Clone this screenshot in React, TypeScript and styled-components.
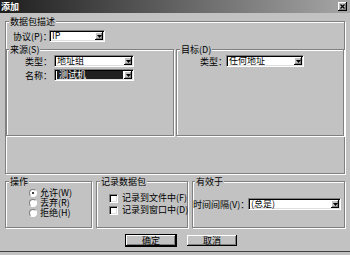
import React from "react";
import styled, { createGlobalStyle } from "styled-components";

const GRAY = "#c2c2c2";
const FONT = `"Noto Sans CJK SC", "Liberation Sans", sans-serif`;

const Global = createGlobalStyle`
  html, body { margin: 0; padding: 0; background: ${GRAY}; }
  body { width: 350px; height: 255px; overflow: hidden; font-family: ${FONT}; }
`;

const Window = styled.div`
  width: 350px;
  height: 252px;
  box-sizing: border-box;
  background: ${GRAY};
  border-bottom: 1px solid #404040;
  display: flex;
  flex-direction: column;
  font-size: 9px;
  line-height: 11px;
  color: #000;
`;

const TitleBar = styled.div`
  height: 13px;
  flex: none;
  display: flex;
  align-items: center;
  justify-content: space-between;
  padding: 0 3px 0 1px;
  background: linear-gradient(to right, #1e1e1e, #a6a6a6);
`;

const TitleText = styled.span`
  color: #fff;
  font-weight: 700;
  font-size: 9px;
  line-height: 11px;
`;

const CloseButton = styled.div`
  width: 9px;
  height: 9px;
  box-sizing: border-box;
  background: ${GRAY};
  box-shadow: inset -1px -1px #000, inset 1px 1px #fff, inset -2px -2px #808080;
  display: flex;
  align-items: center;
  justify-content: center;
`;

const Body = styled.div`
  flex: 1;
  display: flex;
  flex-direction: column;
  padding: 3px 5px 0;
`;

const Group = styled.fieldset<{ $h?: number; $pb?: number }>`
  margin: 0;
  padding: 0 0 ${(p) => p.$pb ?? 0}px;
  min-width: 0;
  min-inline-size: 0;
  border: 1px solid #808080;
  box-shadow: inset 1px 1px #fff, 1px 1px #fff;
  box-sizing: border-box;
  height: ${(p) => (p.$h ? `${p.$h}px` : "auto")};
`;

const Legend = styled.legend<{ $ml: number }>`
  margin-left: ${(p) => p.$ml}px;
  padding: 0 1px;
  height: 11px;
  line-height: 11px;
  font-size: 9px;
  background: ${GRAY};
`;

const FieldRow = styled.div<{ $pl: number; $mt?: number }>`
  display: flex;
  align-items: center;
  height: 12px;
  padding-left: ${(p) => p.$pl}px;
  margin-top: ${(p) => p.$mt ?? 0}px;
`;

const FieldLabel = styled.span<{ $w: number }>`
  width: ${(p) => p.$w}px;
  flex: none;
  white-space: nowrap;
`;

const Combo = styled.div<{ $w: number }>`
  width: ${(p) => p.$w}px;
  height: 12px;
  box-sizing: border-box;
  flex: none;
  background: #fff;
  border-style: solid;
  border-width: 1px;
  border-color: #808080 #fff #fff #808080;
  box-shadow: inset 1px 1px #000, inset -1px -1px #dfdfdf;
  display: flex;
  align-items: stretch;
  padding: 1px;
`;

const ComboText = styled.span`
  flex: 1;
  display: flex;
  align-items: center;
  line-height: 8px;
  padding-left: 1px;
  overflow: visible;
  white-space: nowrap;
`;

const Selection = styled.span`
  background: #202020;
  color: #fff;
  width: 64px;
  height: 8px;
  display: flex;
  align-items: center;
  padding-left: 2px;
`;

const DropButton = styled.div`
  width: 8px;
  flex: none;
  box-sizing: border-box;
  background: ${GRAY};
  box-shadow: inset -1px -1px #000, inset 1px 1px #fff, inset -2px -2px #808080;
  display: flex;
  align-items: center;
  justify-content: center;
`;

const Columns = styled.div`
  display: grid;
  grid-template-columns: 1fr 1fr;
  column-gap: 2px;
  margin-top: 2px;
`;

const BottomRow = styled.div`
  display: grid;
  grid-template-columns: 87px 92px 1fr;
  column-gap: 4px;
  margin-top: 2px;
`;

const OptionList = styled.div<{ $pl: number; $mt: number; $gap: number }>`
  display: flex;
  flex-direction: column;
  gap: ${(p) => p.$gap}px;
  padding-left: ${(p) => p.$pl}px;
  margin-top: ${(p) => p.$mt}px;
`;

const Option = styled.label`
  display: flex;
  align-items: center;
  height: 10px;
  line-height: 10px;
  gap: 3px;
  white-space: nowrap;
`;

const Radio = styled.span<{ $checked?: boolean }>`
  width: 8px;
  height: 8px;
  flex: none;
  box-sizing: border-box;
  border-radius: 50%;
  background: #fff;
  border-style: solid;
  border-width: 1px;
  border-color: #808080 #fff #fff #808080;
  display: flex;
  align-items: center;
  justify-content: center;
  &::after {
    content: "";
    width: 2px;
    height: 2px;
    border-radius: 50%;
    background: ${(p) => (p.$checked ? "#000" : "transparent")};
  }
`;

const Checkbox = styled.span`
  width: 9px;
  height: 9px;
  flex: none;
  box-sizing: border-box;
  background: #fff;
  border-style: solid;
  border-width: 1px;
  border-color: #808080 #fff #fff #808080;
  box-shadow: inset 1px 1px #000, inset -1px -1px #dfdfdf;
  margin-right: 1px;
`;

const ButtonRow = styled.div`
  display: flex;
  gap: 9px;
  padding-left: 120px;
  margin-top: 6px;
`;

const Button = styled.div<{ $default?: boolean }>`
  width: 52px;
  height: 13px;
  box-sizing: border-box;
  background: ${GRAY};
  border: 1px solid ${(p) => (p.$default ? "#000" : "transparent")};
  box-shadow: inset -1px -1px #000, inset 1px 1px #fff, inset -2px -2px #808080;
  display: flex;
  align-items: center;
  justify-content: center;
  line-height: 11px;
`;

const Arrow = () => (
  <svg width="5" height="3" viewBox="0 0 5 3">
    <path d="M0 0h5L2.5 3z" fill="#000" />
  </svg>
);

const CloseGlyph = () => (
  <svg width="5" height="5" viewBox="0 0 5 5">
    <path d="M0.5 0.5L4.5 4.5M4.5 0.5L0.5 4.5" stroke="#000" strokeWidth="1.3" />
  </svg>
);

const ComboBox: React.FC<{ w: number; children: React.ReactNode }> = ({ w, children }) => (
  <Combo $w={w}>
    <ComboText>{children}</ComboText>
    <DropButton>
      <Arrow />
    </DropButton>
  </Combo>
);

export default function App() {
  return (
    <>
      <Global />
      <Window>
        <TitleBar>
          <TitleText>添加</TitleText>
          <CloseButton>
            <CloseGlyph />
          </CloseButton>
        </TitleBar>
        <Body>
          <Group $pb={37}>
            <Legend $ml={3}>数据包描述</Legend>
            <FieldRow $pl={7} $mt={3}>
              <FieldLabel $w={36}>协议(P)：</FieldLabel>
              <ComboBox w={56}>IP</ComboBox>
            </FieldRow>
            <Columns>
              <Group $h={92}>
                <Legend $ml={2}>来源(S)</Legend>
                <FieldRow $pl={18}>
                  <FieldLabel $w={29}>类型：</FieldLabel>
                  <ComboBox w={80}>地址组</ComboBox>
                </FieldRow>
                <FieldRow $pl={18} $mt={2}>
                  <FieldLabel $w={29}>名称：</FieldLabel>
                  <ComboBox w={80}>
                    <Selection>测试机</Selection>
                  </ComboBox>
                </FieldRow>
              </Group>
              <Group $h={92}>
                <Legend $ml={3}>目标(D)</Legend>
                <FieldRow $pl={23}>
                  <FieldLabel $w={26}>类型：</FieldLabel>
                  <ComboBox w={78}>任何地址</ComboBox>
                </FieldRow>
              </Group>
            </Columns>
          </Group>
          <BottomRow>
            <Group $h={52}>
              <Legend $ml={3}>操作</Legend>
              <OptionList $pl={23} $mt={1} $gap={0}>
                <Option>
                  <Radio $checked />
                  允许(W)
                </Option>
                <Option>
                  <Radio />
                  丢弃(R)
                </Option>
                <Option>
                  <Radio />
                  拒绝(H)
                </Option>
              </OptionList>
            </Group>
            <Group $h={52}>
              <Legend $ml={3}>记录数据包</Legend>
              <OptionList $pl={12} $mt={6} $gap={2}>
                <Option>
                  <Checkbox />
                  记录到文件中(F)
                </Option>
                <Option>
                  <Checkbox />
                  记录到窗口中(D)
                </Option>
              </OptionList>
            </Group>
            <Group $h={52}>
              <Legend $ml={2}>有效于</Legend>
              <FieldRow $pl={0} $mt={11}>
                <FieldLabel $w={55}>时间间隔(V)：</FieldLabel>
                <ComboBox w={93}>(总是)</ComboBox>
              </FieldRow>
            </Group>
          </BottomRow>
          <ButtonRow>
            <Button $default>确定</Button>
            <Button>取消</Button>
          </ButtonRow>
        </Body>
      </Window>
    </>
  );
}
